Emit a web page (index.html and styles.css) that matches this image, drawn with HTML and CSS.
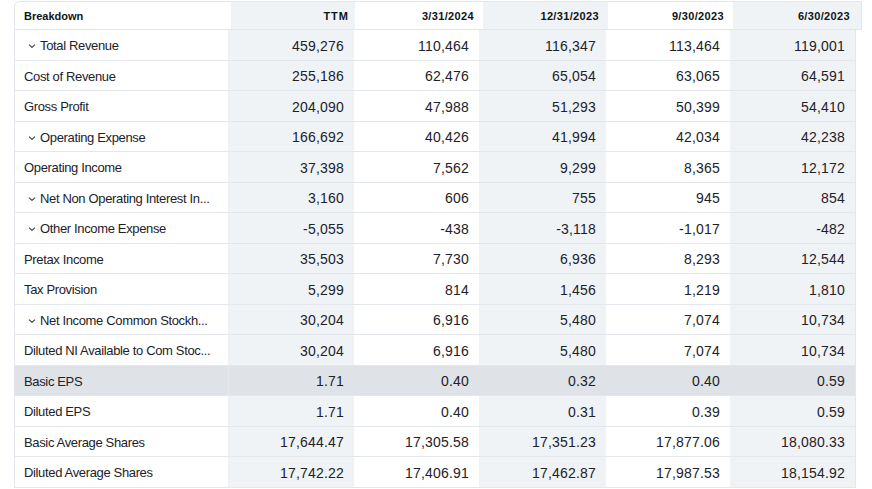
FILE: index.html
```html
<!DOCTYPE html>
<html lang="en">
<head>
<meta charset="utf-8">
<title>Income Statement</title>
<link rel="stylesheet" href="styles.css">
</head>
<body>
<div class="table">
  <div class="thead">
    <div class="th th-label">Breakdown</div>
    <div class="th shade ttm">TTM</div>
    <div class="th">3/31/2024</div>
    <div class="th shade">12/31/2023</div>
    <div class="th">9/30/2023</div>
    <div class="th shade last">6/30/2023</div>
  </div>
  <div class="tbody">
    <div class="row"><div class="label exp"><svg class="chev" viewBox="0 0 8 4" width="8" height="4"><polyline points="1,0.6 4,3.4 7,0.6"/></svg>Total Revenue</div><div class="cell shade">459,276</div><div class="cell">110,464</div><div class="cell shade">116,347</div><div class="cell">113,464</div><div class="cell shade">119,001</div></div>
    <div class="row"><div class="label">Cost of Revenue</div><div class="cell shade">255,186</div><div class="cell">62,476</div><div class="cell shade">65,054</div><div class="cell">63,065</div><div class="cell shade">64,591</div></div>
    <div class="row"><div class="label">Gross Profit</div><div class="cell shade">204,090</div><div class="cell">47,988</div><div class="cell shade">51,293</div><div class="cell">50,399</div><div class="cell shade">54,410</div></div>
    <div class="row"><div class="label exp"><svg class="chev" viewBox="0 0 8 4" width="8" height="4"><polyline points="1,0.6 4,3.4 7,0.6"/></svg>Operating Expense</div><div class="cell shade">166,692</div><div class="cell">40,426</div><div class="cell shade">41,994</div><div class="cell">42,034</div><div class="cell shade">42,238</div></div>
    <div class="row"><div class="label">Operating Income</div><div class="cell shade">37,398</div><div class="cell">7,562</div><div class="cell shade">9,299</div><div class="cell">8,365</div><div class="cell shade">12,172</div></div>
    <div class="row"><div class="label exp"><svg class="chev" viewBox="0 0 8 4" width="8" height="4"><polyline points="1,0.6 4,3.4 7,0.6"/></svg>Net Non Operating Interest In...</div><div class="cell shade">3,160</div><div class="cell">606</div><div class="cell shade">755</div><div class="cell">945</div><div class="cell shade">854</div></div>
    <div class="row"><div class="label exp"><svg class="chev" viewBox="0 0 8 4" width="8" height="4"><polyline points="1,0.6 4,3.4 7,0.6"/></svg>Other Income Expense</div><div class="cell shade">-5,055</div><div class="cell">-438</div><div class="cell shade">-3,118</div><div class="cell">-1,017</div><div class="cell shade">-482</div></div>
    <div class="row"><div class="label">Pretax Income</div><div class="cell shade">35,503</div><div class="cell">7,730</div><div class="cell shade">6,936</div><div class="cell">8,293</div><div class="cell shade">12,544</div></div>
    <div class="row"><div class="label">Tax Provision</div><div class="cell shade">5,299</div><div class="cell">814</div><div class="cell shade">1,456</div><div class="cell">1,219</div><div class="cell shade">1,810</div></div>
    <div class="row"><div class="label exp"><svg class="chev" viewBox="0 0 8 4" width="8" height="4"><polyline points="1,0.6 4,3.4 7,0.6"/></svg>Net Income Common Stockh...</div><div class="cell shade">30,204</div><div class="cell">6,916</div><div class="cell shade">5,480</div><div class="cell">7,074</div><div class="cell shade">10,734</div></div>
    <div class="row"><div class="label">Diluted NI Available to Com Stoc...</div><div class="cell shade">30,204</div><div class="cell">6,916</div><div class="cell shade">5,480</div><div class="cell">7,074</div><div class="cell shade">10,734</div></div>
    <div class="row active"><div class="label">Basic EPS</div><div class="cell shade">1.71</div><div class="cell">0.40</div><div class="cell shade">0.32</div><div class="cell">0.40</div><div class="cell shade">0.59</div></div>
    <div class="row"><div class="label">Diluted EPS</div><div class="cell shade">1.71</div><div class="cell">0.40</div><div class="cell shade">0.31</div><div class="cell">0.39</div><div class="cell shade">0.59</div></div>
    <div class="row"><div class="label">Basic Average Shares</div><div class="cell shade">17,644.47</div><div class="cell">17,305.58</div><div class="cell shade">17,351.23</div><div class="cell">17,877.06</div><div class="cell shade">18,080.33</div></div>
    <div class="row"><div class="label">Diluted Average Shares</div><div class="cell shade">17,742.22</div><div class="cell">17,406.91</div><div class="cell shade">17,462.87</div><div class="cell">17,987.53</div><div class="cell shade">18,154.92</div></div>
  </div>
</div>
</body>
</html>
```

FILE: styles.css
```css
html, body {
  margin: 0;
  padding: 0;
  background: #ffffff;
}

body {
  font-family: "Liberation Sans", Arial, sans-serif;
  color: #1d2228;
  padding: 1px 0 0 14px;
}

.table {
  display: flex;
  flex-direction: column;
  width: max-content;
}

.thead {
  display: grid;
  grid-template-columns: 216px 124px 128px 125px 125px 128px;
  height: 29px;
  box-sizing: border-box;
  border: 1px solid #e3e6ea;
  border-top-left-radius: 6px;
}

.th {
  display: flex;
  align-items: center;
  justify-content: flex-end;
  padding-top: 1px;
  padding-right: 9px;
  font-size: 11px;
  font-weight: 700;
  letter-spacing: 0.35px;
  color: #0f1419;
}

.th-label {
  justify-content: flex-start;
  padding-left: 9px;
  letter-spacing: 0;
  border-top-left-radius: 6px;
}

.th.ttm {
  letter-spacing: 1px;
  padding-right: 6px;
}

.th.last {
  padding-right: 11px;
}

.tbody {
  display: flex;
  flex-direction: column;
  border-left: 1px solid #e3e6ea;
  border-right: 1px solid #e3e6ea;
  width: max-content;
}

.row {
  display: grid;
  grid-template-columns: 214px 125px 125px 127px 124px 125px;
  height: 30.53px;
  box-sizing: border-box;
  border-bottom: 1px solid #e3e6ea;
}

.label {
  display: flex;
  align-items: center;
  padding-top: 2px;
  padding-left: 9px;
  font-size: 13px;
  letter-spacing: -0.35px;
  white-space: nowrap;
  overflow: hidden;
  border-right: 1px solid #eef0f3;
}

.label.exp {
  padding-left: 13px;
  gap: 4px;
}

.chev {
  flex: none;
  fill: none;
  stroke: #3d444b;
  stroke-width: 1.1;
  margin-top: 1px;
}

.cell {
  display: flex;
  align-items: center;
  justify-content: flex-end;
  padding-top: 2px;
  padding-right: 10px;
  font-size: 14px;
  letter-spacing: 0.2px;
  white-space: nowrap;
}

.shade {
  background: #f0f3f6;
}

.row.active,
.row.active .shade {
  background: #dfe2e7;
}

.row.active .label {
  border-right-color: #e7e9ec;
}
```
